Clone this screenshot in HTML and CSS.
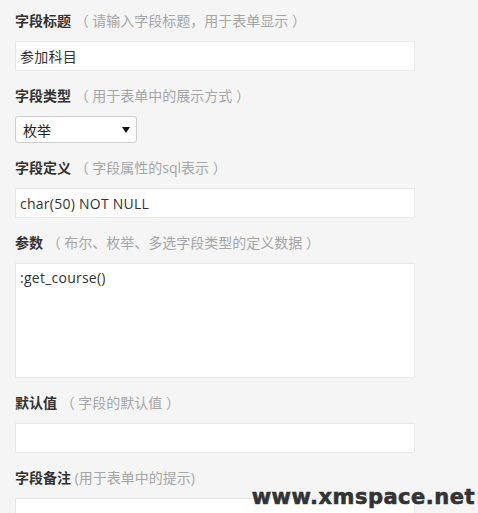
FILE: index.html
```html
<!DOCTYPE html>
<html lang="zh-CN">
<head>
    <meta charset="UTF-8">
    <meta name="viewport" content="width=device-width, initial-scale=1.0">
    <title>字段设置</title>
    <link rel="stylesheet" href="styles.css">
</head>
<body>
    <!-- Field settings form -->
    <form class="field-form">
        <div class="form-group">
            <label class="field-label">字段标题 <span class="hint">（ 请输入字段标题，用于表单显示 ）</span></label>
            <input class="field-input" type="text" value="参加科目">
        </div>
        <div class="form-group">
            <label class="field-label">字段类型 <span class="hint">（ 用于表单中的展示方式 ）</span></label>
            <div class="field-select">
                <span>枚举</span>
                <svg class="arrow" width="8" height="6" viewBox="0 0 8 6"><path d="M0 0H8L4 6Z" fill="#111"/></svg>
            </div>
        </div>
        <div class="form-group">
            <label class="field-label">字段定义 <span class="hint">（ 字段属性的sql表示 ）</span></label>
            <input class="field-input" type="text" value="char(50) NOT NULL">
        </div>
        <div class="form-group">
            <label class="field-label">参数 <span class="hint">（ 布尔、枚举、多选字段类型的定义数据 ）</span></label>
            <textarea class="field-textarea">:get_course()</textarea>
        </div>
        <div class="form-group">
            <label class="field-label">默认值 <span class="hint">（ 字段的默认值 ）</span></label>
            <input class="field-input" type="text" value="">
        </div>
        <div class="form-group">
            <label class="field-label">字段备注 <span class="hint">(用于表单中的提示)</span></label>
            <input class="field-input" type="text" value="">
        </div>
    </form>
    <!-- Site watermark -->
    <div class="watermark">www.xmspace.net</div>
</body>
</html>
```

FILE: styles.css
```css
/* Basic page styling */
body {
    margin: 0;
    background-color: #f5f5f5;
    font-family: "Open Sans", "Noto Sans CJK SC", sans-serif;
    font-size: 14px;
    color: #333;
    overflow: hidden;
}

.field-form {
    padding: 11px 15px 0;
}

.form-group {
    margin-bottom: 15px;
}

.field-label {
    display: block;
    height: 20px;
    line-height: 20px;
    margin-bottom: 10px;
    font-weight: bold;
    color: #333;
}

.hint {
    font-weight: normal;
    color: #a6a6a6;
}

.field-input,
.field-textarea {
    display: block;
    box-sizing: border-box;
    width: 400px;
    margin: 0;
    border: 1px solid #e8e8e8;
    background: #fff;
    font-family: inherit;
    font-size: 14px;
    letter-spacing: 0.25px;
    color: #333;
    outline: none;
}

.field-input {
    height: 30px;
    padding: 0 4px;
}

.field-textarea {
    height: 115px;
    padding: 4px 4px;
    line-height: 20px;
    resize: none;
}

.field-select {
    display: flex;
    align-items: center;
    justify-content: space-between;
    box-sizing: border-box;
    width: 122px;
    height: 27px;
    padding: 0 6px 0 7px;
    border: 1px solid #cfcfcf;
    border-radius: 3px;
    background: #fff;
    color: #222;
}

.watermark {
    position: absolute;
    right: 3px;
    bottom: 4px;
    font-family: "DejaVu Sans", sans-serif;
    font-size: 21px;
    font-weight: bold;
    letter-spacing: 0.5px;
    line-height: 24px;
    color: #333;
    -webkit-text-stroke: 0.6px #333;
}
```
